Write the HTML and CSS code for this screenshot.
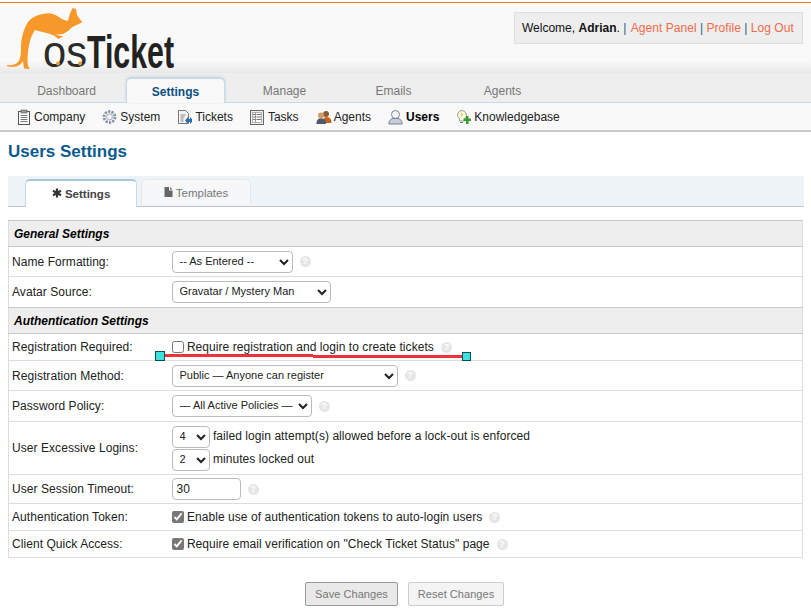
FILE: index.html
```html
<!DOCTYPE html>
<html lang="en">
<head>
    <meta charset="UTF-8">
    <meta name="viewport" content="width=device-width, initial-scale=1.0">
    <title>Users Settings</title>
    <link rel="stylesheet" href="styles.css">
</head>
<body>
    <div class="page">
        <div class="header">
            <svg class="logo" width="240" height="84" viewBox="0 0 240 84">
                <path fill="#f7982a" d="M7 65 C11 65.500 15 65 18 62 C21 59 21 52 21 47 C21 40 23 30 28 22 C32 17 41 13 50 13.300 C55 14 58 17 62 19 C65 20.500 67 21 68 20.700 C69 17 70 12 72.700 8 L76 9 C76.500 12 77 14 77.300 15.700 L82.300 22.300 L75 25.700 C72 27 70 29 68.300 30.700 L63.300 34 L55 34.700 L63.300 36.300 L58.300 39 L54.300 35.700 C50 34 47 33 43.300 32.300 L35 30 C33 33 31 37 30 41 C28 48 27 60 28 66 L30 69 L24 68.500 L23 61 C21 64 19 66 16 66.500 C13 67 10 67 7 66 Z"></path>
                <text class="logoThin" x="43" y="67" textLength="44" lengthAdjust="spacingAndGlyphs">os</text>
                <text class="logoBold" x="87" y="68" textLength="87" lengthAdjust="spacingAndGlyphs">Ticket</text>
                <circle cx="58" cy="63.500" r="2" fill="#f7982a"></circle>
                <circle cx="80" cy="63.500" r="2" fill="#f7982a"></circle>
            </svg>
            <div class="welcome">
                Welcome, <b>Adrian</b>. <span class="sep">|</span> <a href="#">Agent Panel</a> <span class="sep">|</span> <a href="#">Profile</a> <span class="sep">|</span> <a href="#">Log Out</a>
            </div>
        </div>

        <ul class="nav">
            <li>Dashboard</li>
            <li class="active">Settings</li>
            <li>Manage</li>
            <li>Emails</li>
            <li>Agents</li>
        </ul>

        <ul class="subnav">
            <li>
                <svg width="16" height="16" viewBox="0 0 16 16"><rect x="2.500" y="2.500" width="11" height="13" fill="#fff" stroke="#555"></rect><rect x="5" y="1" width="6" height="3" fill="#999" stroke="#555" stroke-width=".6"></rect><path d="M4.500 6.500h7M4.500 8.500h7M4.500 10.500h7M4.500 12.500h7" stroke="#777"></path></svg>
                Company
            </li>
            <li>
                <svg width="16" height="16" viewBox="0 0 16 16"><circle cx="7.500" cy="8" r="5.500" fill="none" stroke="#8794a8" stroke-width="2.800" stroke-dasharray="2.200 1.200"></circle><circle cx="7.500" cy="8" r="3" fill="#f4f5f7" stroke="#a3adbb"></circle></svg>
                System
            </li>
            <li>
                <svg width="16" height="16" viewBox="0 0 16 16"><path d="M1.500 1.500h7l3 3v10h-10z" fill="#f4f4f4" stroke="#777"></path><path d="M3.500 6h5M3.500 8h4M3.500 10h3M3.500 12h3" stroke="#888"></path><path d="M8 11.500l3-3.500v2h2V8l2 2v3l-2 2v-2h-2v2z" fill="#2a6fb5"></path></svg>
                Tickets
            </li>
            <li>
                <svg width="16" height="16" viewBox="0 0 16 16"><rect x=".5" y="1.500" width="13" height="14" fill="#eee" stroke="#666"></rect><rect x="2.500" y="3.500" width="9" height="10" fill="#fbfbfb" stroke="#999" stroke-width=".7"></rect><path d="M5.500 3.500v10" stroke="#999"></path><path d="M3 5.500h2M3 8h2M3 10.500h2M6.500 5.500h4.500M6.500 8h4.500M6.500 10.500h4.500" stroke="#777"></path></svg>
                Tasks
            </li>
            <li>
                <svg width="16" height="16" viewBox="0 0 16 16"><circle cx="10" cy="5" r="3" fill="#8a5a32"></circle><path d="M7 14c0-4 1-6 4-6s4.500 2 4.500 6z" fill="#c8601f"></path><circle cx="5" cy="6.500" r="3" fill="#d39a62"></circle><path d="M.5 15c0-3.500 1-5.500 4.500-5.500S10 11.500 10 15z" fill="#4a5a70"></path></svg>
                Agents
            </li>
            <li class="active">
                <svg width="16" height="16" viewBox="0 0 16 16"><circle cx="7.500" cy="5.500" r="4" fill="#f2f4f8" stroke="#77839a"></circle><path d="M.8 15c0-3.500 2-5 4.200-5.500h5c2.200.5 4.200 2 4.200 5.500z" fill="#c9ced8" stroke="#77839a"></path></svg>
                Users
            </li>
            <li>
                <svg width="16" height="16" viewBox="0 0 16 16"><path d="M6 1.500a4.500 4.500 0 0 1 2.500 8.200V12H3.500V9.700A4.500 4.500 0 0 1 6 1.500z" fill="#fdf8d8" stroke="#8a9a9a" stroke-width=".9"></path><path d="M5 4l1.500 2L5 7.500" fill="none" stroke="#e0a92c"></path><path d="M4 13.500h3" stroke="#777"></path><path d="M10 7h2.500v2.500H15V12h-2.500v3H10v-3H7.500V9.500H10z" fill="#3a9a32"></path></svg>
                Knowledgebase
            </li>
        </ul>

        <div class="content">
            <h2>Users Settings</h2>

            <ul class="tabs">
                <li class="active">
                    <svg width="10" height="10" viewBox="0 0 10 10"><path d="M5 .5v9M1 2.700l8 4.600M9 2.700L1 7.300" stroke="#333" stroke-width="2.200"></path></svg>
                    Settings
                </li>
                <li>
                    <svg width="9" height="10" viewBox="0 0 9 10"><path d="M.5 0H5v3.500h3.500V10H.5zM6 0l2.500 2.500H6z" fill="#666"></path></svg>
                    Templates
                </li>
            </ul>

            <table class="settings">
                <colgroup>
                    <col class="labelCol">
                    <col>
                </colgroup>
                <tr class="section row-h26"><th colspan="2">General Settings</th></tr>
                <tr class="row-h30">
                    <td class="label">Name Formatting:</td>
                    <td><select class="w121"><option>-- As Entered --</option></select><span class="tip">?</span></td>
                </tr>
                <tr class="row-h31">
                    <td class="label">Avatar Source:</td>
                    <td><select class="w159"><option>Gravatar / Mystery Man</option></select></td>
                </tr>
                <tr class="section row-h26"><th colspan="2">Authentication Settings</th></tr>
                <tr class="row-h27">
                    <td class="label">Registration Required:</td>
                    <td><label class="check"><input type="checkbox"> Require registration and login to create tickets</label><span class="tip">?</span></td>
                </tr>
                <tr class="row-h30">
                    <td class="label">Registration Method:</td>
                    <td><select class="w226"><option>Public — Anyone can register</option></select><span class="tip">?</span></td>
                </tr>
                <tr class="row-h31">
                    <td class="label">Password Policy:</td>
                    <td><select class="w140"><option>— All Active Policies —</option></select><span class="tip">?</span></td>
                </tr>
                <tr class="row-h53">
                    <td class="label">User Excessive Logins:</td>
                    <td>
                        <div class="line"><select class="w38"><option>4</option></select> failed login attempt(s) allowed before a lock-out is enforced</div>
                        <div class="line"><select class="w38"><option>2</option></select> minutes locked out</div>
                    </td>
                </tr>
                <tr class="row-h29">
                    <td class="label">User Session Timeout:</td>
                    <td><input class="timeout" type="text" value="30"><span class="tip">?</span></td>
                </tr>
                <tr class="row-h27">
                    <td class="label">Authentication Token:</td>
                    <td><label class="check"><input type="checkbox" checked> Enable use of authentication tokens to auto-login users</label><span class="tip">?</span></td>
                </tr>
                <tr class="row-h27">
                    <td class="label">Client Quick Access:</td>
                    <td><label class="check"><input type="checkbox" checked> Require email verification on "Check Ticket Status" page</label><span class="tip">?</span></td>
                </tr>
            </table>

            <div class="buttons">
                <button class="save" type="button">Save Changes</button>
                <button type="button">Reset Changes</button>
            </div>
        </div>

        <!-- annotation drawn over the screenshot -->
        <div class="mark">
            <span class="seg"></span>
            <span class="seg low"></span>
            <span class="handle left"></span>
            <span class="handle right"></span>
        </div>
    </div>
</body>
</html>
```

FILE: styles.css
```css
* {
    box-sizing: border-box;
}
html, body {
    height: 100%;
    overflow: hidden;
}
body {
    font-family: "Liberation Sans", Arial, sans-serif;
    font-size: 12px;
    color: #000;
    background-color: #fff;
    margin: 0;
    padding: 0;
}
ul {
    list-style: none;
    margin: 0;
    padding: 0;
}
.page {
    position: relative;
    height: 608px;
    padding-top: 2px;
}
.header {
    height: 71px;
    display: flex;
    justify-content: space-between;
    align-items: flex-start;
    padding: 9px 8px 0 0;
    border-top: 1px solid #f47a20;
    background: linear-gradient(to bottom, #f9f9f9 0, #f9f9f9 58px, #e8e8e8 100%);
}
.logo {
    margin-top: -12px;
    flex: none;
}
.logoThin {
    font-size: 44px;
    fill: #2b2b2b;
}
.logoBold {
    font-size: 47px;
    font-weight: bold;
    fill: #222;
}
.welcome {
    width: 289px;
    height: 32px;
    line-height: 30px;
    padding-left: 7px;
    white-space: nowrap;
    background-color: #eee;
    border: 1px solid #ddd;
    color: #111;
}
.welcome a {
    color: #f26b4a;
    text-decoration: none;
    letter-spacing: .06px;
}
.sep {
    color: #2a5d8c;
}
.sep:first-of-type {
    margin-right: 1px;
}
.nav {
    height: 30px;
    display: flex;
    padding: 5px 0 0 17px;
    background-color: #eee;
    border-bottom: 1px solid #c5d9e8;
}
.nav li {
    width: 99px;
    margin-right: 10px;
    text-align: center;
    line-height: 27px;
    color: #777;
}
.nav li.active {
    height: 25px;
    color: #0a4f80;
    font-weight: bold;
    background-color: #f9f9f9;
    border: 1px solid #c5d9e8;
    border-bottom: none;
    border-radius: 5px 5px 0 0;
    box-shadow: 0 -1px 3px rgba(120, 160, 200, 0.4);
}
.subnav {
    height: 29px;
    display: flex;
    align-items: center;
    gap: 17px;
    padding-left: 16px;
    background-color: #f9f9f9;
    border-bottom: 2px solid #c8c8c8;
}
.subnav li {
    display: flex;
    align-items: center;
    color: #222;
}
.subnav svg {
    margin-right: 2px;
}
.subnav li.active {
    font-weight: bold;
    color: #000;
}
.content {
    padding: 0 7px 0 8px;
}
h2 {
    margin: 0;
    height: 44px;
    padding-top: 9px;
    font-size: 17px;
    line-height: 22px;
    color: #0a5a8f;
}
.tabs {
    height: 31px;
    display: flex;
    align-items: flex-end;
    padding-left: 17px;
    margin-bottom: 13px;
    font-size: 11.5px;
    background-color: #eef3f8;
    border-bottom: 1px solid #c4c4c4;
}
.tabs li {
    height: 26px;
    width: 110px;
    margin-right: 4px;
    margin-bottom: 1px;
    text-align: center;
    line-height: 26px;
    color: #777;
    background-color: #f5f7f9;
    border: 1px solid #e3e8ed;
    border-bottom: none;
    border-radius: 5px 5px 0 0;
}
.tabs li.active {
    height: 28px;
    width: 112px;
    margin-bottom: -1px;
    line-height: 26px;
    font-weight: bold;
    color: #444;
    background-color: #fff;
    border: 1px solid #c5d9e8;
    border-top: 2px solid #a9c6e0;
    border-bottom: none;
}
.settings {
    width: 795px;
    border-collapse: collapse;
    table-layout: fixed;
    border: 1px solid #ddd;
}
.labelCol {
    width: 160px;
}
.settings tr {
    border-bottom: 1px solid #ddd;
}
.settings td, .settings th {
    padding: 0 3px;
    vertical-align: middle;
    letter-spacing: .06px;
}
.settings .label {
    color: #222;
}
.settings td + td {
    color: #222;
    white-space: nowrap;
}
.section th {
    text-align: left;
    font-style: italic;
    font-weight: bold;
    padding-left: 5px;
    letter-spacing: 0;
    background-color: #eee;
    border-top: 1px solid #c8c8c8;
    border-bottom: 1px solid #c8c8c8;
}
.row-h26 { height: 26px; }
.row-h27 { height: 27px; }
.row-h29 { height: 29px; }
.row-h30 { height: 30px; }
.row-h31 { height: 31px; }
.row-h53 { height: 53px; }
select, input[type="text"] {
    height: 22px;
    font-family: inherit;
    font-size: 12px;
    color: #222;
    background-color: #fff;
    border: 1px solid #bbb;
    border-radius: 4px;
    vertical-align: middle;
}
select {
    font-size: 11px;
    padding: 0 0 2px 3px;
}
.w38 { width: 38px; }
.w121 { width: 121px; }
.w140 { width: 140px; }
.w159 { width: 159px; }
.w226 { width: 226px; }
.timeout {
    width: 69px;
    padding-left: 4px;
}
.check input {
    width: 12px;
    height: 12px;
    margin: 0;
    vertical-align: -2px;
    accent-color: #777;
}
.line {
    height: 23px;
    line-height: 22px;
}
.tip {
    display: inline-block;
    width: 11px;
    height: 11px;
    margin-left: 7px;
    border-radius: 50%;
    background-color: #e6e6e6;
    color: #fff;
    font-size: 9px;
    font-weight: bold;
    line-height: 11px;
    text-align: center;
    vertical-align: middle;
}
.buttons {
    display: flex;
    justify-content: center;
    gap: 10px;
    margin-top: 24px;
    padding-right: 3px;
}
button {
    height: 24px;
    width: 96px;
    padding: 0;
    font-family: inherit;
    font-size: 11px;
    letter-spacing: .05px;
    color: #777;
    background-color: #f4f4f4;
    border: 1px solid #ccc;
    border-radius: 2px;
}
button.save {
    width: 93px;
    background-color: #e9e9e9;
    border-color: #999;
}
.mark {
    position: absolute;
    left: 155px;
    top: 350px;
    width: 316px;
    height: 11px;
}
.seg {
    position: absolute;
    left: 8px;
    top: 4px;
    width: 150px;
    height: 3px;
    background-color: #f2303a;
}
.seg.low {
    left: 158px;
    top: 5px;
    width: 150px;
}
.handle {
    position: absolute;
    width: 9px;
    height: 9px;
    background-color: #3fe0e0;
    border: 1px solid #0a5050;
}
.handle.left {
    left: 0;
    top: 1px;
    width: 10px;
    height: 10px;
}
.handle.right {
    right: 0;
    top: 2px;
}
```
